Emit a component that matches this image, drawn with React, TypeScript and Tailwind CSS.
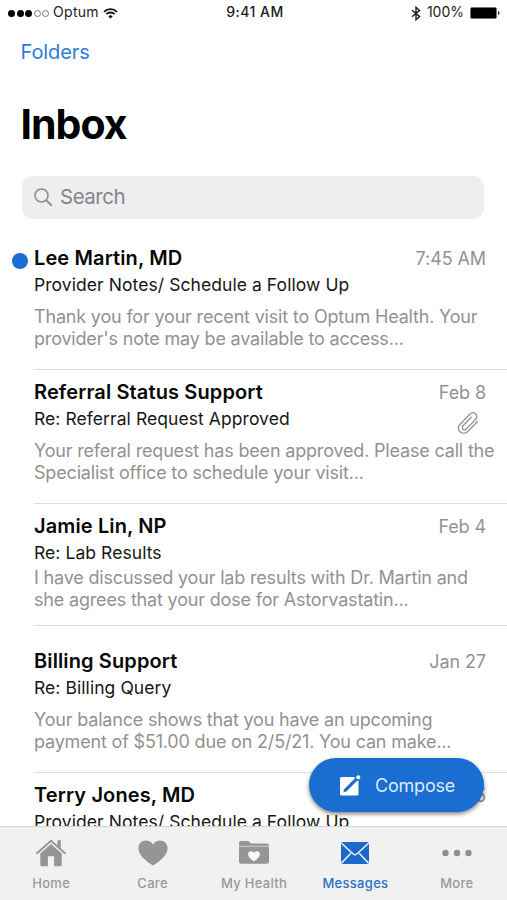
import React from 'react';

interface Message {
  from: string;
  subject: string;
  date: string;
  preview: string[];
  unread?: boolean;
  attachment?: boolean;
  rowClass: string;
  previewClass: string;
}

const messages: Message[] = [
  {
    from: 'Lee Martin, MD',
    subject: 'Provider Notes/ Schedule a Follow Up',
    date: '7:45 AM',
    preview: ['Thank you for your recent visit to Optum Health. Your', 'provider\'s note may be available to access...'],
    unread: true,
    rowClass: 'h-[124px]',
    previewClass: 'mt-2'
  },
  {
    from: 'Referral Status Support',
    subject: 'Re: Referral Request Approved',
    date: 'Feb 8',
    preview: ['Your referal request has been approved. Please call the', 'Specialist office to schedule your visit...'],
    attachment: true,
    rowClass: 'h-[134px] pt-2.5',
    previewClass: 'mt-2'
  },
  {
    from: 'Jamie Lin, NP',
    subject: 'Re: Lab Results',
    date: 'Feb 4',
    preview: ['I have discussed your lab results with Dr. Martin and', 'she agrees that your dose for Astorvastatin...'],
    rowClass: 'h-[122px] pt-2.5',
    previewClass: 'mt-px'
  },
  {
    from: 'Billing Support',
    subject: 'Re: Billing Query',
    date: 'Jan 27',
    preview: ['Your balance shows that you have an upcoming', 'payment of $51.00 due on 2/5/21. You can make...'],
    rowClass: 'h-[147px] pt-[23px]',
    previewClass: 'mt-2'
  },
  {
    from: 'Terry Jones, MD',
    subject: 'Provider Notes/ Schedule a Follow Up',
    date: 'Jan 25',
    preview: [],
    rowClass: 'h-[147px] pt-2.5',
    previewClass: 'mt-2'
  }
];

const WifiIcon = () => (
  <svg className="ml-[4px] h-[11px] w-[15px]" viewBox="0 0 15 11" fill="none" stroke="#111" strokeWidth="1.9">
    <path d="M1 3.8a9.2 9.2 0 0 1 13 0M3.4 6.2a5.8 5.8 0 0 1 8.2 0" />
    <path d="M7.5 10.6 5.3 8.4a3.1 3.1 0 0 1 4.4 0z" fill="#111" stroke="none" />
  </svg>
);

const HomeIcon = () => (
  <svg className="h-[28px] w-[30px]" viewBox="0 0 30 28">
    <path d="M21.5 1.2h3.3v8.2l-3.3-3z" fill="#959595" />
    <path d="M1 14.2 15 1.8l14 12.4" fill="none" stroke="#959595" strokeWidth="1.9" strokeLinecap="round" />
    <path d="M4.3 14.4 15 5l10.7 9.4v11.3a1.6 1.6 0 0 1-1.6 1.6h-6V17.2h-6.2v10.1h-6a1.6 1.6 0 0 1-1.6-1.6z" fill="#959595" />
  </svg>
);

const HeartIcon = () => (
  <svg className="h-[26px] w-[30px]" viewBox="0 0 30 26">
    <path d="M15 25.6C12 23.2.4 17 .4 8.2.4 3.6 3.8.6 7.9.6c3 0 5.6 1.5 7.1 4 1.5-2.5 4.1-4 7.1-4 4.1 0 7.5 3 7.5 7.6C29.6 17 18 23.2 15 25.6z" fill="#959595" />
  </svg>
);

const FolderIcon = () => (
  <svg className="h-[23px] w-[30px]" viewBox="0 0 30 23">
    <path d="M0 5V2a2 2 0 0 1 2-2h6.5c1.2 0 1.600.6 2.200 1.300.5.700 1 1.100 2 1.100H28a2 2 0 0 1 2 2V5z" fill="#959595" />
    <path d="M0 4.800h30v2H0z" fill="#c4c4c4" />
    <path d="M0 6h30v14.500a2.200 2.200 0 0 1-2.200 2.200H2.200A2.200 2.200 0 0 1 0 20.500z" fill="#959595" />
    <path d="M15 20.500c-1.200-1.100-5.900-3.600-5.900-7.200 0-1.900 1.300-3.100 2.900-3.100 1.400 0 2.400.7 3 1.700.6-1 1.600-1.700 3-1.700 1.600 0 2.900 1.200 2.900 3.100 0 3.600-4.700 6.100-5.900 7.200z" fill="#f8f8f8" />
  </svg>
);

const MailIcon = () => (
  <svg className="h-[22px] w-[28px]" viewBox="0 0 28 22">
    <rect width="28" height="22" rx="1" fill="#1b69c9" />
    <path d="M0 .8 12.2 12a2.7 2.7 0 0 0 3.6 0L28 .8M.3 21.4l9.5-10.2M27.7 21.4l-9.5-10.2" fill="none" stroke="#f1f1f1" strokeWidth="1.5" />
  </svg>
);

const DotsIcon = () => (
  <svg className="h-[8px] w-[30px]" viewBox="0 0 30 8" fill="#8f8f8f">
    <circle cx="3.5" cy="4" r="3.2" />
    <circle cx="15" cy="4" r="3.2" />
    <circle cx="26.5" cy="4" r="3.2" />
  </svg>
);

const tabs = [
  { label: 'Home', icon: <HomeIcon /> },
  { label: 'Care', icon: <HeartIcon /> },
  { label: 'My Health', icon: <FolderIcon /> },
  { label: 'Messages', icon: <MailIcon />, active: true },
  { label: 'More', icon: <DotsIcon /> }
];

const StatusBar = () => (
  <div className="grid h-[26px] grid-cols-3 items-center px-2 text-[14px] leading-5 text-[#1c1c1c]">
    <div className="flex items-center">
      <div className="flex gap-[1.5px]">
        <span className="h-[7px] w-[7px] rounded-full bg-black" />
        <span className="h-[7px] w-[7px] rounded-full bg-black" />
        <span className="h-[7px] w-[7px] rounded-full bg-black" />
        <span className="h-[7px] w-[7px] rounded-full border border-[#777]" />
        <span className="h-[7px] w-[7px] rounded-full border border-[#777]" />
      </div>
      <span className="ml-[4px] pb-[2px] tracking-[0.3px]">Optum</span>
      <WifiIcon />
    </div>
    <div className="pb-[2px] pl-[3px] text-center font-medium tracking-[0.5px]">9:41 AM</div>
    <div className="flex items-center justify-end">
      <svg className="h-[15px] w-[10px]" viewBox="0 0 10 15" fill="none" stroke="#222" strokeWidth="1.4">
        <path d="M1 4.2 8.6 10.6 5 13.8V1.2l3.6 3.2L1 10.8" />
      </svg>
      <span className="ml-[6px] pb-[2px]">100%</span>
      <svg className="-mr-px ml-[6px] h-[12px] w-[30px]" viewBox="0 0 30 12">
        <rect x=".5" y=".5" width="26" height="11" rx="1.5" fill="#000" stroke="#777" />
        <path d="M28 4v4c2-.4 2-3.6 0-4z" fill="#333" />
      </svg>
    </div>
  </div>
);

const MessageRow = ({ message }: { message: Message }) => (
  <div className="flex">
    <div className="w-[34px] shrink-0 pl-[11.5px]">
      {message.unread && <div className="mt-[6.5px] h-4 w-4 rounded-full bg-[#1a6dd1]" />}
    </div>
    <div className={`flex-1 border-b border-[#dedede] ${message.rowClass}`}>
      <div className="flex h-6 items-center justify-between pr-[21px]">
        <h2 className="text-[20px] font-semibold tracking-[0.12px] text-[#080808]">{message.from}</h2>
        <span className="pt-px text-[18px] tracking-[-0.1px] text-[#929292]">{message.date}</span>
      </div>
      <div className="mt-[3.5px] flex h-6 items-center justify-between pr-7">
        <p className="text-[17.5px] tracking-[0.07px] text-[#161616]">{message.subject}</p>
        {message.attachment && (
          <svg className="mt-[7px] h-[24px] w-[22px]" viewBox="0 0 22 24" fill="none" stroke="#929292" strokeWidth="1.3" strokeLinecap="round">
            <path d="M20.5 10.5 11 20.3c-2 2.1-5.2 2.6-7.6.8-2.5-1.9-2.7-5.1-.7-7.3L12.8 3.2c1.6-1.7 4-1.9 5.7-.5 1.7 1.5 1.8 3.9.2 5.6L9.4 17.9c-1 1.1-2.4 1.2-3.4.3-1-.9-1-2.3 0-3.4l8.2-8.6" />
          </svg>
        )}
      </div>
      <div className={`whitespace-nowrap text-[18px] leading-[22px] tracking-[-0.18px] text-[#929292] ${message.previewClass}`}>
        {message.preview.map((line) => (
          <p key={line}>{line}</p>
        ))}
      </div>
    </div>
  </div>
);

const App: React.FC = () => {
  return (
    <div className="relative flex h-[900px] w-[507px] flex-col overflow-hidden bg-white font-['Inter',sans-serif]">
      <StatusBar />
      <header className="h-[220px] shrink-0 px-[20.5px]">
        <a className="mt-[11px] block text-[20px] leading-[30px] tracking-[-0.1px] text-[#2d7dd8]">Folders</a>
        <h1 className="mt-[32px] text-[41px] font-bold leading-[50px] tracking-[-1px] text-black">Inbox</h1>
        <div className="ml-[1.5px] mt-[27px] flex h-[43px] w-[462px] items-center rounded-[11px] bg-[#eeeef0] pl-[12px] text-[20.5px] tracking-[-0.5px] text-[#858588]">
          <svg className="mr-[7px] h-[19px] w-[19px]" viewBox="0 0 19 19" fill="none" stroke="#8b8b8e" strokeWidth="1.5">
            <circle cx="7.5" cy="7.5" r="6.5" />
            <path d="m12.2 12.2 5.5 5.5" strokeWidth="1.9" />
          </svg>
          Search
        </div>
      </header>

      <main className="min-h-0 flex-1 overflow-hidden">
        {messages.map((message) => (
          <MessageRow key={message.from} message={message} />
        ))}
      </main>

      <nav className="grid h-[74px] shrink-0 grid-cols-5 border-t border-[#d4d4d4] bg-[#f1f1f1]">
        {tabs.map((tab) => (
          <div key={tab.label} className="flex flex-col items-center pl-px">
            <div className="mt-[11px] flex h-[29px] items-center">{tab.icon}</div>
            <span
              className={`mt-[8px] whitespace-nowrap text-[13px] font-medium leading-[17px] tracking-[0.3px] ${tab.active ? 'text-[#2b6fc4]' : 'text-[#999]'}`}
            >
              {tab.label}
            </span>
          </div>
        ))}
      </nav>

      <button className="absolute bottom-[88px] right-[23px] flex h-[54px] w-[175px] items-center rounded-full bg-[#1a6dd1] pl-[30px] text-[18px] tracking-[-0.2px] text-[#deebfa] shadow-[0_2px_4px_rgba(0,0,0,0.5)]">
        <svg className="mr-[14px] h-[21px] w-[22px]" viewBox="0 0 22 21">
          <rect x="1" y="2" width="18.5" height="18.5" rx="1.5" fill="#fff" />
          <path d="m4.300 17.200.9-3L16.500 2.800l2.300 2.300L7.400 16.400z" fill="#1a6dd1" />
          <path d="m17 4.500 1.500-1.500" stroke="#1a6dd1" strokeWidth="5" />
          <circle cx="19.300" cy="2.300" r="2" fill="#fff" />
        </svg>
        Compose
      </button>
    </div>
  );
};

export default App;
